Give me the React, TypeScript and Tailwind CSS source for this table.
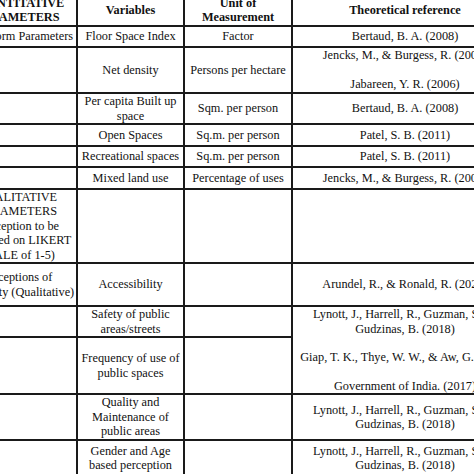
import React from "react";

type CellProps = {
  lines?: string[];
  bold?: boolean;
  span?: boolean;
};

function Cell({ lines = [], bold = false, span = false }: CellProps) {
  return (
    <div
      className={`flex flex-col items-center justify-center overflow-visible border-r-2 border-b-2 border-[#1a1a1a] text-center ${
        span ? "row-span-2" : ""
      } ${bold ? "font-bold" : ""}`}
    >
      {lines.map((l, i) =>
        l === "" ? (
          <div key={i} className="h-[14.5px]" />
        ) : (
          <div key={i} className="whitespace-nowrap">
            {l}
          </div>
        )
      )}
    </div>
  );
}

const lynott = ["Lynott, J., Harrell, R., Guzman, S., &", "Gudzinas, B. (2018)"];

// rows of the table: [col1, col2, col3, col4]
const rows: (string[] | null)[][] = [
  [["Built Form Parameters"], ["Floor Space Index"], ["Factor"], ["Bertaud, B. A. (2008)"]],
  [
    [],
    ["Net density"],
    ["Persons per hectare"],
    ["Jencks, M., & Burgess, R. (2006)", "", "Jabareen, Y. R. (2006)"],
  ],
  [[], ["Per capita Built up", "space"], ["Sqm. per person"], ["Bertaud, B. A. (2008)"]],
  [[], ["Open Spaces"], ["Sq.m. per person"], ["Patel, S. B. (2011)"]],
  [[], ["Recreational spaces"], ["Sq.m. per person"], ["Patel, S. B. (2011)"]],
  [[], ["Mixed land use"], ["Percentage of uses"], ["Jencks, M., & Burgess, R. (2006)"]],
  [
    ["QUALITATIVE", "PARAMETERS", "(Perception to be", "measured on LIKERT", "SCALE of 1-5)"],
    [],
    [],
    [],
  ],
  [["Perceptions of", "Livability (Qualitative)"], ["Accessibility"], [], ["Arundel, R., & Ronald, R. (2020)"]],
];

export default function App() {
  return (
    <div className="w-[474px] h-[474px] overflow-hidden bg-white text-[#111] font-['Liberation_Serif','Times_New_Roman',serif] text-[12.3px] leading-[14.5px]">
      <div className="-ml-[44px] -mt-[7px] grid w-[563px] grid-cols-[120px_107px_108px_226px] grid-rows-[32px_21px_46px_31px_22px_21px_22px_74px_43px_31px_57px_46px_36px] border-t-2 border-l-2 border-[#1a1a1a]">
        {/* header */}
        <Cell bold lines={["QUANTITATIVE", "PARAMETERS"]} />
        <Cell bold lines={["Variables"]} />
        <Cell bold lines={["Unit of", "Measurement"]} />
        <Cell bold lines={["Theoretical reference"]} />

        {rows.map((r, i) => (
          <React.Fragment key={i}>
            {r.map((c, j) => (
              <Cell key={j} lines={c ?? []} />
            ))}
          </React.Fragment>
        ))}

        {/* safety + frequency share one reference cell */}
        <Cell />
        <Cell lines={["Safety of public", "areas/streets"]} />
        <Cell />
        <Cell
          span
          lines={[
            ...lynott,
            "",
            "Giap, T. K., Thye, W. W., & Aw, G. (2014)",
            "",
            "Government of India. (2017)",
          ]}
        />
        <Cell />
        <Cell lines={["Frequency of use of", "public spaces"]} />
        <Cell />

        <Cell />
        <Cell lines={["Quality and", "Maintenance of", "public areas"]} />
        <Cell />
        <Cell lines={lynott} />

        <Cell />
        <Cell lines={["Gender and Age", "based perception"]} />
        <Cell />
        <Cell lines={lynott} />
      </div>
    </div>
  );
}
